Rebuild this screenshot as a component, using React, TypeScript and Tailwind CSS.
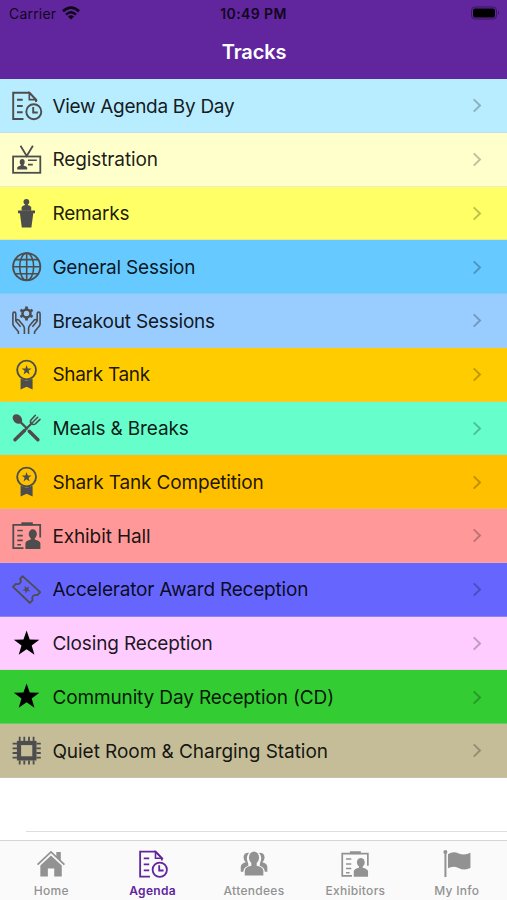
import { ReactNode, useState } from "react";

const STAR = "M0 -1 L.235 -.324 L.951 -.309 L.38 .124 L.588 .809 L0 .4 L-.588 .809 L-.38 .124 L-.951 -.309 L-.235 -.324Z";

const icons: Record<string, ReactNode> = {
  agenda: (
    <g fill="none" stroke="currentColor" strokeWidth="1.9">
      <path d="M11.5 28H1.2V1.7H17.5L24 8.6V11" />
      <path d="M17.3 2V8.6H24Z" strokeWidth="1.6" />
      <path d="M5 8.8H10.7M5 15H10.7M5 21.3H10.7" />
      <circle cx="21.8" cy="20.7" r="7.5" />
      <path d="M21.2 16V21.5H25.8" />
    </g>
  ),
  badge: (
    <g fill="none" stroke="currentColor" strokeWidth="1.8">
      <rect x="1.1" y="11.5" width="27.2" height="16.3" />
      <path d="M8.5 .8L14.7 11L20.9 .8" />
      <path d="M16 15.3H24.8M16 19.6H20.8" strokeWidth="1.6" />
      <ellipse cx="10.2" cy="17" rx="2.5" ry="3" fill="currentColor" stroke="none" />
      <path d="M5.2 24.4V22.6Q5.4 21.4 8.8 20.6V18H11.6V20.6Q15 21.4 15.2 22.6V24.4Z" fill="currentColor" stroke="none" />
    </g>
  ),
  podium: (
    <g fill="currentColor">
      <circle cx="14.4" cy="2.8" r="2.9" />
      <path d="M13 4H15.8V7H13Z" />
      <path d="M9.6 11.7V8.4Q9.8 6.6 13 6H15.8Q19 6.6 19.2 8.4V11.7Z" />
      <path d="M6 11.6H23V14.3H21.3L19.4 28.6H9.8L7.9 14.3H6Z" />
    </g>
  ),
  globe: (
    <g fill="none" stroke="currentColor" strokeWidth="1.6">
      <circle cx="14.7" cy="14.7" r="13.6" strokeWidth="1.9" />
      <ellipse cx="14.7" cy="14.7" rx="7" ry="13.6" />
      <path d="M14.7 1V28.4M1 14.7H28.4M3.3 7.6H26.1M3.3 21.8H26.1" />
    </g>
  ),
  hands: (
    <g fill="none" stroke="currentColor" strokeWidth="1.6" strokeLinejoin="round">
      <circle cx="14.5" cy="7.4" r="4" strokeWidth="2.5" />
      <path d="M14.5 .4V3.4M14.5 11.4V14.4M8.4 3.9L11 5.4M18 9.4L20.6 10.9M20.6 3.9L18 5.4M11 9.4L8.4 10.9" strokeWidth="2.8" />
      <path d="M6.4 28V25.7L1.7 20Q.9 19 .9 17.5V7.7Q.9 6.1 2.3 6.1Q3.8 6.1 3.8 7.7V15.1L8.6 20.8M3.8 15.1L4.7 13.9Q5.7 13.1 6.7 14.1L11.3 19.5Q12.4 20.8 12.4 22.5V28" />
      <path d="M22.6 28V25.7L27.3 20Q28.1 19 28.1 17.5V7.7Q28.1 6.1 26.7 6.1Q25.2 6.1 25.2 7.7V15.1L20.4 20.8M25.2 15.1L24.3 13.9Q23.3 13.1 22.3 14.1L17.7 19.5Q16.6 20.8 16.6 22.5V28" />
    </g>
  ),
  ribbon: (
    <g fill="currentColor">
      <circle cx="14.6" cy="10" r="9.4" fill="none" stroke="currentColor" strokeWidth="1.9" />
      <path d={STAR} transform="translate(14.6 10.2) scale(5.2)" />
      <path d="M8.6 18.6Q14.6 22.4 20.6 18.6V29.6L14.6 26.8L8.6 29.6Z" />
    </g>
  ),
  meals: (
    <g fill="currentColor" stroke="currentColor" strokeLinecap="round">
      <ellipse cx="5.4" cy="5" rx="4.1" ry="5.4" transform="rotate(-45 5.4 5)" stroke="none" />
      <path d="M7 6.6L15 14.6" strokeWidth="2.2" />
      <path d="M17.3 17.3L25.9 25.7" strokeWidth="3.5" />
      <path d="M3 25.7L12.5 16.6" strokeWidth="3.5" />
      <path d="M12.5 16.6L19.8 9.2" strokeWidth="2.2" />
      <path d="M23.4 1.3L19 5.9Q17.7 8.2 19.4 9.7Q21.2 11.3 23.4 9.9L28 5.4M25.7 3.3L20.8 8.2" fill="none" strokeWidth="1.6" />
    </g>
  ),
  exhibit: (
    <g fill="none" stroke="currentColor" strokeWidth="1.8">
      <path d="M11.5 27.2H1.3V3.8H28.2V16.5" />
      <path d="M9.3 2.8H20.8" strokeWidth="3" />
      <path d="M5.3 9.5H10.8M5.3 14.6H10.8M5.3 19.4H10.8M5.3 23.8H9" strokeWidth="1.6" />
      <ellipse cx="20.8" cy="13" rx="4.1" ry="4.7" fill="currentColor" stroke="none" />
      <path d="M13.4 28V22.2Q13.8 19.7 18.8 18.6V16H22.8V18.6Q27.8 19.7 28.4 22.2V28Z" fill="currentColor" stroke="none" />
    </g>
  ),
  ticket: (
    <g fill="none" stroke="currentColor" strokeWidth="1.8" strokeLinejoin="round">
      <path d="M10.6 1.2L28.2 17.2L25.4 20.1Q22.7 19.2 21 21.1Q19.5 23 20.6 25.2L18 28L1 11.8L3.8 8.9Q6.5 9.8 8.2 7.9Q9.7 6 8 3.8Z" />
      <path d={STAR} transform="translate(14.5 14.5) rotate(45) scale(4.3)" fill="currentColor" stroke="none" />
    </g>
  ),
  star: <path d={STAR} transform="translate(14.6 14.8) scale(13.4)" fill="currentColor" />,
  chip: (
    <g fill="none" stroke="currentColor">
      <rect x="7" y="7" width="15.4" height="15.4" strokeWidth="4.2" />
      <path
        d="M7.7 .8V5M12.3 .8V5M17 .8V5M21.6 .8V5M7.7 24.4V28.6M12.3 24.4V28.6M17 24.4V28.6M21.6 24.4V28.6M.6 7.7H5M.6 12.3H5M.6 17H5M.6 21.6H5M24.4 7.7H28.8M24.4 12.3H28.8M24.4 17H28.8M24.4 21.6H28.8"
        strokeWidth="1.8"
      />
    </g>
  ),
  home: (
    <g fill="currentColor">
      <path d="M20.3 2.2H25V11L20.3 7Z" />
      <path d="M.6 15.3L14.7 2L28.8 15.3" fill="none" stroke="currentColor" strokeWidth="1.9" />
      <path d="M14.7 5.8L26 16.2V27.8H18.1V19.5H11.4V27.8H3.5V16.2Z" />
    </g>
  ),
  people: (
    <g fill="currentColor">
      <path d="M9.5 3Q4 2.7 3.7 7.7Q3.7 11.2 6 12.9Q1 14.3 .8 17.6V22.8H3.4Q3.8 18 8.8 16.5Q9 14 7.7 11.5Q6.2 7 9.5 3Z" />
      <path d="M20 3Q25.5 2.7 25.8 7.7Q25.8 11.2 23.5 12.9Q28.5 14.3 28.7 17.6V22.8H26.1Q25.7 18 20.7 16.5Q20.5 14 21.8 11.5Q23.3 7 20 3Z" />
      <ellipse cx="14.7" cy="8" rx="5.3" ry="6.4" />
      <path d="M5 26.7V21.6Q5.4 17.8 11.9 16.5V12H17.5V16.5Q24 17.8 24.5 21.6V26.7Z" />
    </g>
  ),
  flag: (
    <g fill="currentColor">
      <circle cx="2.5" cy="2.2" r="2.1" />
      <path d="M1.5 3H3.6V28.4H1.5Z" />
      <path d="M5.2 4.4Q10.5 1 16.5 3.6Q22.5 5.9 28.8 3V19Q22.5 22 16.2 18.8Q10.5 16.2 5.2 19.2Z" />
    </g>
  ),
};

function Icon({ name, className = "" }: { name: string; className?: string }) {
  return (
    <svg viewBox="0 0 29.4 29.4" className={`shrink-0 overflow-visible ${className}`}>
      {icons[name]}
    </svg>
  );
}

const tracks = [
  { label: "View Agenda By Day", icon: "agenda", bg: "bg-[#b8ecff]", tracking: "tracking-[-0.3px]" },
  { label: "Registration", icon: "badge", bg: "bg-[#ffffcc]", tracking: "tracking-[-0.1px]" },
  { label: "Remarks", icon: "podium", bg: "bg-[#ffff66]", tracking: "tracking-[-0.2px]" },
  { label: "General Session", icon: "globe", bg: "bg-[#66c9ff]", tracking: "tracking-[-0.2px]" },
  { label: "Breakout Sessions", icon: "hands", bg: "bg-[#99ccff]", tracking: "tracking-[-0.2px]" },
  { label: "Shark Tank", icon: "ribbon", bg: "bg-[#ffcc00]", tracking: "tracking-[-0.3px]" },
  { label: "Meals & Breaks", icon: "meals", bg: "bg-[#66ffcc]", tracking: "tracking-[-0.15px]" },
  { label: "Shark Tank Competition", icon: "ribbon", bg: "bg-[#ffc000]", tracking: "tracking-[-0.16px]" },
  { label: "Exhibit Hall", icon: "exhibit", bg: "bg-[#ff9999]", tracking: "tracking-[-0.1px]" },
  { label: "Accelerator Award Reception", icon: "ticket", bg: "bg-[#6666ff]", tracking: "tracking-[-0.2px]" },
  { label: "Closing Reception", icon: "star", bg: "bg-[#ffccff]", tracking: "tracking-[-0.15px]" },
  { label: "Community Day Reception (CD)", icon: "star", bg: "bg-[#33cc33]", tracking: "tracking-[-0.13px]" },
  { label: "Quiet Room & Charging Station", icon: "chip", bg: "bg-[#c4bd97]", tracking: "tracking-[-0.05px]" },
];

const tabs = [
  { label: "Home", icon: "home" },
  { label: "Agenda", icon: "agenda" },
  { label: "Attendees", icon: "people" },
  { label: "Exhibitors", icon: "exhibit" },
  { label: "My Info", icon: "flag" },
];

function StatusBar() {
  return (
    <div className="grid h-[27px] grid-cols-3 items-center px-[9px] text-[14px] text-black/85">
      <div className="flex items-center gap-[6px]">
        <span className="tracking-[0.2px]">Carrier</span>
        <svg viewBox="0 0 18 14" className="mb-px h-[14px] w-[18px]" fill="none" stroke="currentColor" strokeWidth="2.7">
          <path d="M1 5.3Q9 -2 17 5.3" />
          <path d="M4 8.6Q9 4 14 8.6" strokeWidth="2.4" />
          <path d="M9 13.5L5.9 10.5Q9 7.9 12.1 10.5Z" fill="currentColor" stroke="none" />
        </svg>
      </div>
      <span className="text-center font-semibold tracking-[0.4px] whitespace-nowrap">10:49 PM</span>
      <svg viewBox="0 0 30 14" className="mr-[-2px] mb-px h-[14px] w-[30px] justify-self-end">
        <rect x="1.5" y="1" width="25" height="12" rx="3.5" fill="none" stroke="#000" strokeOpacity=".4" />
        <rect x="3" y="2.6" width="22" height="8.8" rx="2" fill="#000" />
        <path d="M28 5Q30 7 28 9Z" fill="#000" fillOpacity=".4" />
      </svg>
    </div>
  );
}

export default function App() {
  const [active, setActive] = useState("Agenda");

  return (
    <div className="flex h-[900px] w-[507px] flex-col overflow-hidden bg-white font-['Inter',sans-serif]">
      <header className="h-[79px] shrink-0 bg-[#61259e]">
        <StatusBar />
        <h1 className="pl-px text-center text-[20px] leading-[51px] font-semibold tracking-[-0.15px] text-white">Tracks</h1>
      </header>

      {/* Track list */}
      <main className="flex-1">
        {tracks.map((t) => (
          <div
            key={t.label}
            className={`flex h-[53.75px] items-center border-b border-[#c8c8c8]/35 pt-px pr-[25px] pl-3 ${t.bg}`}
          >
            <Icon
              name={t.icon}
              className={`size-[29.4px] ${t.icon === "star" ? "text-black" : "text-[#4d4d4d]"}`}
            />
            <span className={`ml-[11px] flex-1 pt-[2px] text-[19px] whitespace-nowrap text-black/90 ${t.tracking}`}>
              {t.label}
            </span>
            <svg viewBox="0 0 10 16" className="h-[15px] w-[10px] text-black/25" fill="none" stroke="currentColor" strokeWidth="2.1">
              <path d="M1.5 1.5L8.2 8L1.5 14.5" />
            </svg>
          </div>
        ))}
        <div className="ml-[26px] h-[54px] border-b border-[#dedede]" />
      </main>

      {/* Bottom tabs */}
      <nav className="grid h-[60px] shrink-0 grid-cols-5 border-t border-[#d5d5d5] bg-[#fafafa]">
        {tabs.map((t) => (
          <button
            key={t.label}
            onClick={() => setActive(t.label)}
            className={`flex flex-col items-center pt-[9px] pl-px ${active === t.label ? "text-[#61259e]" : "text-[#929292]"}`}
          >
            <Icon name={t.icon} className="size-[28px]" />
            <span
              className={`mt-[5px] text-[12px] leading-4 tracking-[0.3px] ${active === t.label ? "font-semibold" : "font-medium"}`}
            >
              {t.label}
            </span>
          </button>
        ))}
      </nav>
    </div>
  );
}
